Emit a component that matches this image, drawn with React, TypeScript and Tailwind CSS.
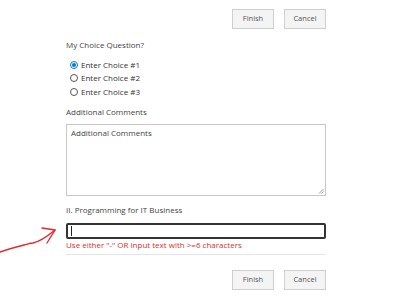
import React from 'react';

const font = { fontFamily: '"Open Sans", "Noto Sans", sans-serif' };

const FormButtons: React.FC = () => (
    <div className="flex justify-end gap-[10px]">
        <button className="w-[42px] h-[20px] bg-[#f4f4f4] border border-[#cfcfcf] text-[7.5px] text-[#555]">Finish</button>
        <button className="w-[42px] h-[20px] bg-[#f4f4f4] border border-[#cfcfcf] text-[7.5px] text-[#555]">Cancel</button>
    </div>
);

const Radio: React.FC<{ checked?: boolean }> = ({ checked }) => (
    <span className={`w-[8px] h-[8px] rounded-full border flex items-center justify-center shrink-0 ${checked ? 'border-[#0078d4]' : 'border-[#555]'}`}>
        {checked && <span className="w-[4px] h-[4px] rounded-full bg-[#0078d4]"></span>}
    </span>
);

export default function App() {
    const choices = ['Enter Choice #1', 'Enter Choice #2', 'Enter Choice #3'];

    return (
        <div className="relative w-[400px] h-[304px] bg-white overflow-hidden text-[8px] text-[#444]" style={font}>
            <div className="ml-[66px] w-[260px] pt-[9px] flex flex-col">
                <FormButtons />

                {/* Choice question */}
                <p className="mt-[10px] leading-[12px]">My Choice Question?</p>
                <div className="mt-[7px] flex flex-col pl-[4px]">
                    {choices.map((c, i) => (
                        <label key={c} className="flex items-center gap-[3px] h-[13.5px] text-[#333]">
                            <Radio checked={i === 0} />
                            <span>{c}</span>
                        </label>
                    ))}
                </div>

                {/* Comments */}
                <p className="mt-[7px] leading-[12px]">Additional Comments</p>
                <div className="relative mt-[6px] h-[72px] border border-[#c8c8c8] pl-[4px] pt-[2px] leading-[12px] text-[#444]">
                    Additional Comments
                    <svg className="absolute right-[1px] bottom-[1px]" width="6" height="6" viewBox="0 0 6 6">
                        <path d="M5.5 1 L1 5.5 M5.5 3.5 L3.5 5.5" stroke="#888" strokeWidth="0.8" />
                    </svg>
                </div>

                {/* Required text field */}
                <p className="mt-[8px] leading-[12px]">II. Programming for IT Business</p>
                <div className="mt-[7px] h-[16px] border-2 border-[#333] rounded-[2px] flex items-center pl-[3px]">
                    <span className="w-[1px] h-[10px] bg-[#222]"></span>
                </div>
                <p className="leading-[12px] text-[#d9302c]">Use either "-" OR input text with &gt;=6 characters</p>
                <div className="mt-[3px] h-[1px] bg-[#e6e6e6]"></div>

                <div className="mt-[15px]">
                    <FormButtons />
                </div>
            </div>

            {/* hand drawn arrow */}
            <svg className="absolute left-0 top-[220px]" width="62" height="40" viewBox="0 0 62 40">
                <path d="M0 32 C 8 29, 16 27, 24 25 C 28 24, 30 23, 33 23 C 38 22, 44 19, 55 10" fill="none" stroke="#e8262a" strokeWidth="1.4" strokeLinecap="round" />
                <path d="M42 8 L55 10 L47 23" fill="none" stroke="#e8262a" strokeWidth="1.4" strokeLinecap="round" strokeLinejoin="round" />
            </svg>
        </div>
    );
}
